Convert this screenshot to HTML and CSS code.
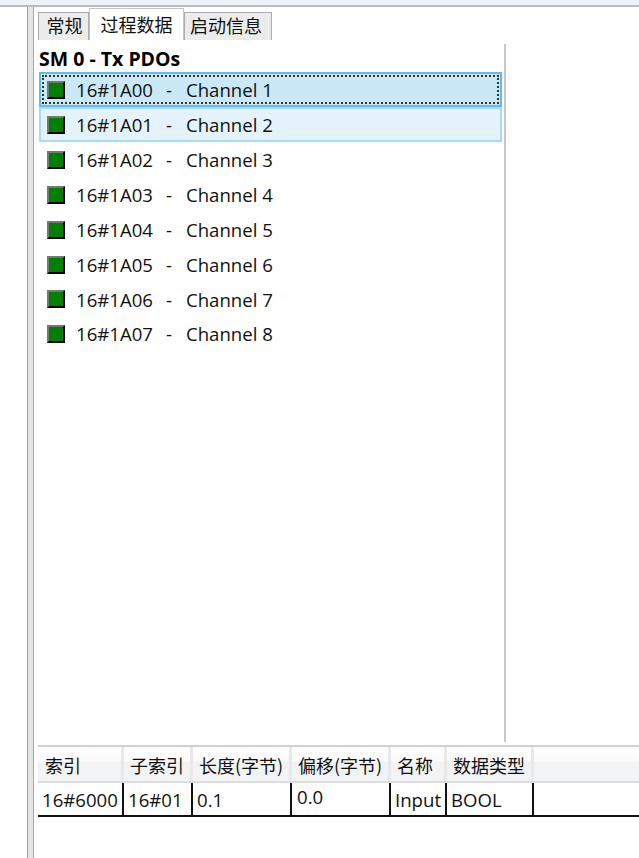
FILE: index.html
```html
<!DOCTYPE html>
<html lang="zh-CN">

<head>
    <meta charset="UTF-8">
    <title>过程数据</title>
    <link rel="stylesheet" href="styles.css">
</head>

<body>
    <div class="topbar"></div>
    <div class="main">
        <div class="leftpane"></div>
        <div class="splitter"></div>
        <div class="content">
            <div class="tabs">
                <div class="tab tab1">常规</div>
                <div class="tab active">过程数据</div>
                <div class="tab tab3">启动信息</div>
            </div>
            <div class="upper">
                <div class="pdopane">
                    <h1>SM 0 - Tx PDOs</h1>
                    <ul class="pdolist">
                        <li class="row focused"><span class="focusbox"><i class="check"></i><span class="idx">16#1A00</span><span class="dash">-</span><span>Channel 1</span></span></li>
                        <li class="row hovered"><span class="focusbox"><i class="check"></i><span class="idx">16#1A01</span><span class="dash">-</span><span>Channel 2</span></span></li>
                        <li class="row"><span class="focusbox"><i class="check"></i><span class="idx">16#1A02</span><span class="dash">-</span><span>Channel 3</span></span></li>
                        <li class="row"><span class="focusbox"><i class="check"></i><span class="idx">16#1A03</span><span class="dash">-</span><span>Channel 4</span></span></li>
                        <li class="row"><span class="focusbox"><i class="check"></i><span class="idx">16#1A04</span><span class="dash">-</span><span>Channel 5</span></span></li>
                        <li class="row"><span class="focusbox"><i class="check"></i><span class="idx">16#1A05</span><span class="dash">-</span><span>Channel 6</span></span></li>
                        <li class="row"><span class="focusbox"><i class="check"></i><span class="idx">16#1A06</span><span class="dash">-</span><span>Channel 7</span></span></li>
                        <li class="row"><span class="focusbox"><i class="check"></i><span class="idx">16#1A07</span><span class="dash">-</span><span>Channel 8</span></span></li>
                    </ul>
                </div>
            </div>
            <div class="grid">
                <div class="ghead">
                    <div class="th first">索引</div>
                    <div class="th">子索引</div>
                    <div class="th">长度(字节)</div>
                    <div class="th">偏移(字节)</div>
                    <div class="th">名称</div>
                    <div class="th">数据类型</div>
                </div>
                <div class="gbody">
                    <div class="td">16#6000</div>
                    <div class="td">16#01</div>
                    <div class="td">0.1</div>
                    <div class="td pad raised">0.0</div>
                    <div class="td">Input</div>
                    <div class="td">BOOL</div>
                </div>
            </div>
        </div>
    </div>
</body>

</html>
```

FILE: styles.css
```css
* {
    margin: 0;
    padding: 0;
    box-sizing: border-box;
}

html,
body {
    height: 100%;
    overflow: hidden;
}

body {
    display: flex;
    flex-direction: column;
    background-color: #fff;
    color: #111;
    font-family: "Open Sans", "Noto Sans CJK SC", sans-serif;
    font-size: 18.6px;
}

.topbar {
    height: 7px;
    flex: none;
    background-color: #eef3fb;
    border-bottom: 2px solid #bcbcbc;
}

.main {
    flex: 1;
    display: flex;
}

.leftpane {
    width: 27px;
}

.splitter {
    width: 7px;
    background-color: #e4e4e4;
    border-left: 1px solid #a0a0a0;
    border-right: 1px solid #a8a8a8;
}

.content {
    flex: 1;
    display: flex;
    flex-direction: column;
    padding: 1px 0 0 4px;
}

/* tabs */
.tabs {
    height: 32px;
    flex: none;
    display: flex;
    align-items: flex-end;
}

.tab {
    height: 28px;
    display: flex;
    align-items: center;
    justify-content: center;
    padding-bottom: 3px;
    background-color: #ececec;
    border: 1px solid #acacac;
    border-bottom: none;
    white-space: nowrap;
    font-family: "Noto Sans CJK SC", sans-serif;
    font-size: 18px;
}

.tab1 {
    width: 51px;
    padding-left: 2px;
}

.tab3 {
    width: 88px;
    padding-right: 4px;
}

.tab.active {
    width: 95px;
    height: 32px;
    padding-bottom: 1px;
    background-color: #fff;
    border-color: #c4c4c4;
}

/* pdo list */
.upper {
    height: 705px;
    flex: none;
}

.pdopane {
    width: 468px;
    height: 698px;
    margin-top: 4px;
    border-right: 2px solid #c8c8c8;
    padding: 0 2px 0 1px;
}

h1 {
    height: 28px;
    font-size: 19.5px;
    font-weight: 700;
    line-height: 29px;
    color: #000;
}

.pdolist {
    list-style: none;
}

.row {
    height: 35px;
    padding: 2px;
    border: 1px solid transparent;
}

.row:nth-child(7) {
    height: 34px;
}

.focused {
    background-color: #cbe8f6;
    border: 2px solid #62bbe6;
    padding: 1px;
}

.hovered {
    background-color: #e4f3fb;
    border: 2px solid #a6dcf5;
    padding: 1px;
}

.focusbox {
    height: 100%;
    display: flex;
    align-items: center;
    padding-left: 3px;
    border: 2px solid transparent;
    white-space: nowrap;
}

.focused .focusbox {
    border: 2px dotted #333;
}

.check {
    width: 18px;
    height: 18px;
    flex: none;
    margin-right: 11px;
    background-color: #008000;
    border: 2px solid #000;
    border-top-color: #777;
    border-left-color: #777;
}

.idx {
    width: 90px;
}

.dash {
    width: 20px;
}

/* bottom grid */
.grid {
    flex: none;
    border-top: 2px solid #d0d0d0;
}

.ghead {
    height: 36px;
    display: grid;
    grid-template-columns: 86px 69px 99px 99px 56px 87px 1fr;
    background: linear-gradient(#fff 0, #fbfbfb 40%, #f2f3f5 45%, #f2f3f5 100%);
    border-bottom: 2px solid #dcdcdc;
}

.th {
    display: flex;
    align-items: center;
    padding: 2px 0 0 6px;
    border-right: 3px solid #e9e9e9;
    font-family: "Noto Sans CJK SC", sans-serif;
    font-size: 18px;
    white-space: nowrap;
}

.th.first {
    padding-left: 7px;
}

.gbody {
    height: 34px;
    display: grid;
    grid-template-columns: 86px 69px 99px 99px 56px 87px 1fr;
    border-bottom: 2px solid #111;
}

.td {
    display: flex;
    align-items: center;
    padding: 0 0 0 4px;
    border-right: 2px solid #111;
    white-space: nowrap;
}

.pad {
    padding-left: 5px;
}

.raised {
    padding-bottom: 5px;
}

.td:last-child {
    border-right: 2px solid #111;
}
```
